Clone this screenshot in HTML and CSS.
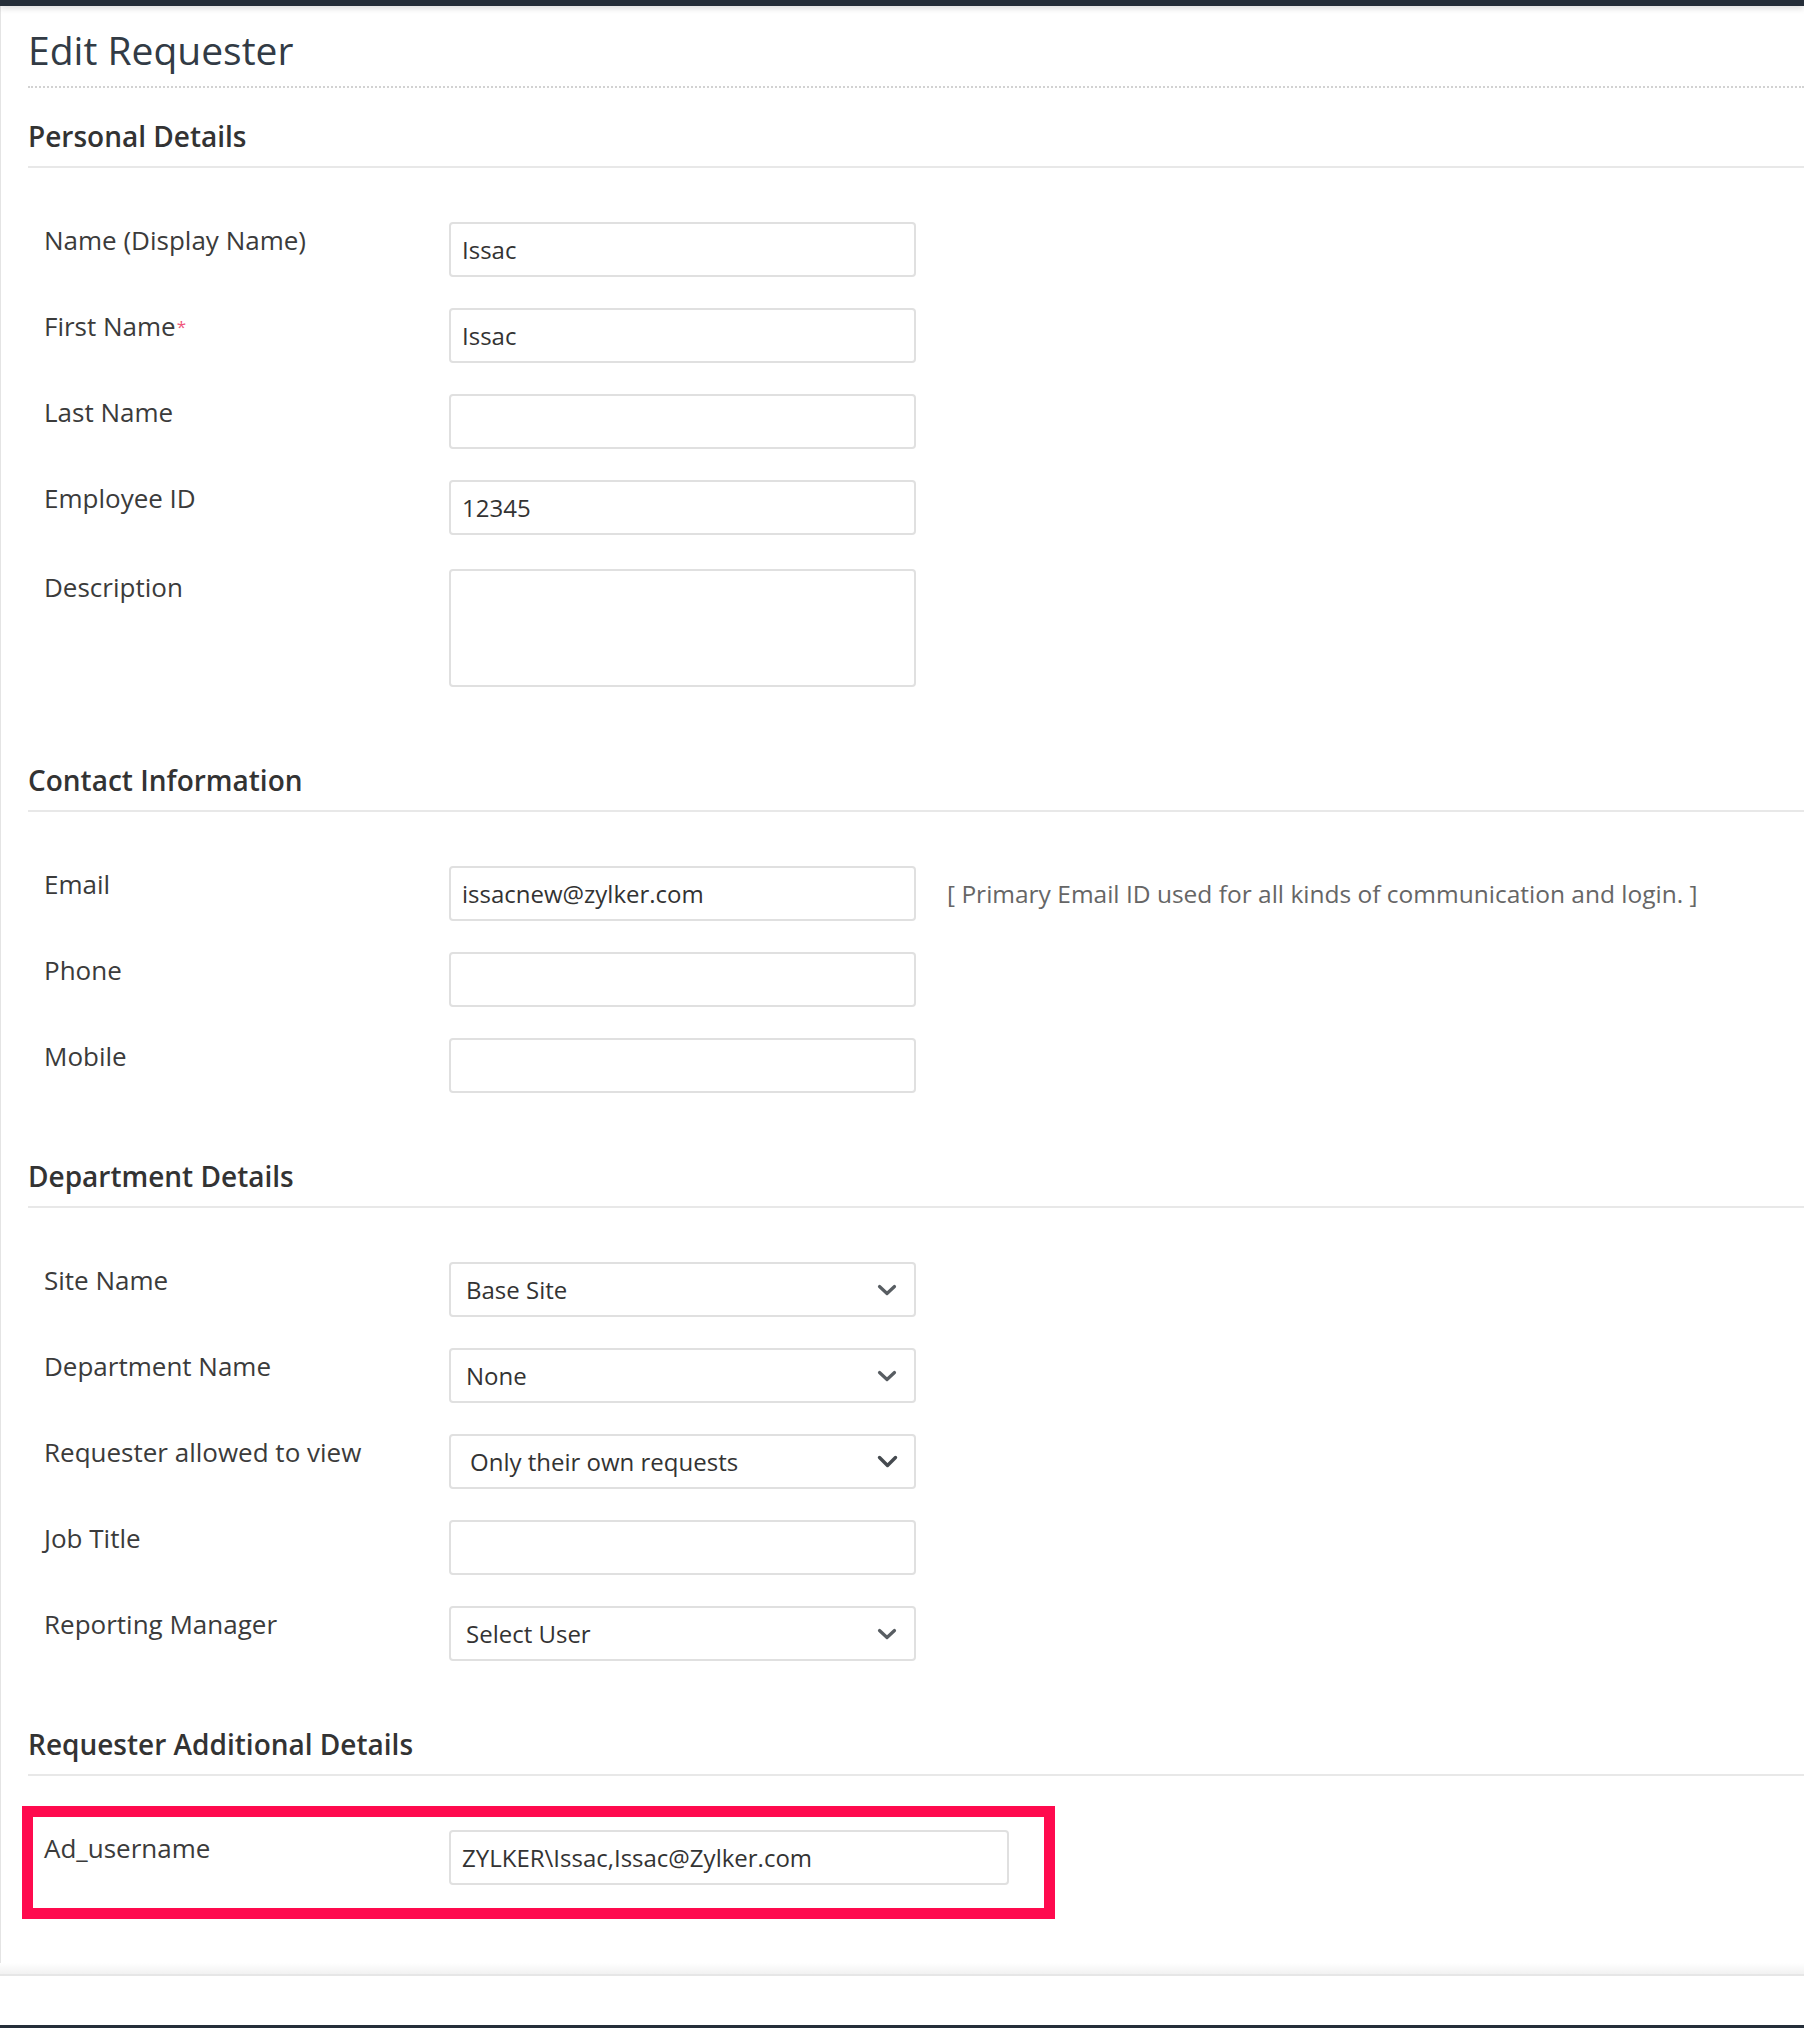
FILE: index.html
```html
<!DOCTYPE html>
<html lang="en">
<head>
<meta charset="utf-8">
<title>Edit Requester</title>
<link rel="stylesheet" href="styles.css">
</head>
<body>
<div class="topbar"></div>
<main class="panel">
  <h1 class="page-title">Edit Requester</h1>

  <section class="section section-first">
    <h2 class="section-title">Personal Details</h2>
    <div class="rows">
      <div class="row"><div class="label">Name (Display Name)</div><div class="input">Issac</div></div>
      <div class="row"><div class="label">First Name<span class="req">*</span></div><div class="input">Issac</div></div>
      <div class="row"><div class="label">Last Name</div><div class="input"></div></div>
      <div class="row"><div class="label">Employee ID</div><div class="input">12345</div></div>
      <div class="row row-last-tall"><div class="label">Description</div><div class="input textarea"></div></div>
    </div>
  </section>

  <section class="section">
    <h2 class="section-title">Contact Information</h2>
    <div class="rows">
      <div class="row"><div class="label">Email</div><div class="input">issacnew@zylker.com</div><div class="hint">[ Primary Email ID used for all kinds of communication and login. ]</div></div>
      <div class="row"><div class="label">Phone</div><div class="input"></div></div>
      <div class="row"><div class="label">Mobile</div><div class="input"></div></div>
    </div>
  </section>

  <section class="section">
    <h2 class="section-title">Department Details</h2>
    <div class="rows">
      <div class="row"><div class="label">Site Name</div><div class="input select"><span>Base Site</span><svg class="chev" width="20" height="12" viewBox="0 0 20 12"><polyline points="2.5,2.5 10,9.5 17.5,2.5"/></svg></div></div>
      <div class="row"><div class="label">Department Name</div><div class="input select"><span>None</span><svg class="chev" width="20" height="12" viewBox="0 0 20 12"><polyline points="2.5,2.5 10,9.5 17.5,2.5"/></svg></div></div>
      <div class="row"><div class="label">Requester allowed to view</div><div class="input select select-wide"><span>Only their own requests</span><svg class="chev chev-bold" width="21" height="13" viewBox="0 0 21 13"><polyline points="2.5,2.5 10.5,10.5 18.5,2.5"/></svg></div></div>
      <div class="row"><div class="label">Job Title</div><div class="input"></div></div>
      <div class="row"><div class="label">Reporting Manager</div><div class="input select"><span>Select User</span><svg class="chev" width="20" height="12" viewBox="0 0 20 12"><polyline points="2.5,2.5 10,9.5 17.5,2.5"/></svg></div></div>
    </div>
  </section>

  <section class="section">
    <h2 class="section-title">Requester Additional Details</h2>
    <div class="rows rows-highlight">
      <div class="highlight">
        <div class="row"><div class="label">Ad_username</div><div class="input input-wide">ZYLKER\Issac,Issac@Zylker.com</div></div>
      </div>
    </div>
  </section>
</main>
<div class="panel-edge"></div>
<div class="footer"></div>
<div class="bottombar"></div>
</body>
</html>
```

FILE: styles.css
```css
html, body {
  margin: 0;
  padding: 0;
  background: #ffffff;
}

body {
  font-family: "Open Sans", "Noto Sans", sans-serif;
  color: #363636;
}

.topbar {
  height: 6px;
  background: #252e39;
  box-shadow: 0 2px 6px rgba(0, 0, 0, 0.16);
  position: relative;
  z-index: 2;
}

.panel {
  border-left: 1px solid #e4e4e4;
  padding: 19px 0 44px 27px;
}

.panel-edge {
  height: 11px;
  background: linear-gradient(#ffffff, #f1f1f1);
  border-bottom: 2px solid #e6e6e6;
}

.page-title {
  margin: 0;
  font-size: 39px;
  font-weight: 400;
  line-height: 50px;
  color: #323b45;
  padding-bottom: 11px;
  border-bottom: 2px dotted #d2d2d2;
}

.section {
  margin-top: 63px;
}

.section-first {
  margin-top: 28px;
}

.section-title {
  margin: 0;
  font-size: 28px;
  font-weight: 600;
  line-height: 40px;
  color: #333333;
  padding-bottom: 10px;
  border-bottom: 2px solid #e8e8e8;
}

.rows {
  display: flex;
  flex-direction: column;
  gap: 31px;
  padding-top: 54px;
}

.row {
  display: flex;
  align-items: flex-start;
  padding-left: 16px;
}

.row-last-tall {
  margin-top: 3px;
  margin-bottom: 10px;
}

.label {
  width: 405px;
  flex: none;
  font-size: 26px;
  line-height: 36px;
  color: #3b3b3b;
}

.req {
  color: #f0557a;
  font-size: 17px;
  vertical-align: 3px;
  margin-left: 1px;
}

.input {
  width: 467px;
  height: 55px;
  flex: none;
  box-sizing: border-box;
  border: 2px solid #e0e0e0;
  border-radius: 4px;
  padding: 0 11px;
  display: flex;
  align-items: center;
  font-size: 24px;
  color: #333333;
  background: #ffffff;
}

.textarea {
  height: 118px;
}

.select {
  justify-content: space-between;
  padding: 0 17px 0 15px;
}

.select-wide {
  padding-left: 19px;
  padding-right: 16px;
}

.chev {
  fill: none;
  stroke: #585d62;
  stroke-width: 3.2;
  stroke-linecap: round;
  stroke-linejoin: round;
}

.chev-bold {
  stroke: #454a4f;
  stroke-width: 3.4;
}

.hint {
  align-self: center;
  margin-left: 31px;
  font-size: 24.5px;
  color: #666666;
  white-space: nowrap;
}

.rows-highlight {
  padding-top: 30px;
}

.highlight {
  margin-left: -6px;
  width: 1033px;
  box-sizing: border-box;
  border: 11px solid #ff0a4e;
  padding: 13px 0 23px 0;
}

.highlight .row {
  padding-left: 11px;
}

.input-wide {
  width: 560px;
}

.footer {
  height: 49px;
  background: #ffffff;
}

.bottombar {
  height: 3px;
  background: #252e39;
}
```
